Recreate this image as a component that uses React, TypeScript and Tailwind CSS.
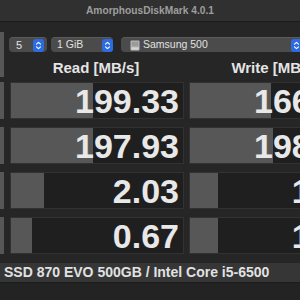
import React from "react";

type Row = { r: string; rw: number; w: string; ww: number };

const rows: Row[] = [
  { r: "199.33", rw: 82, w: "166.55", ww: 81 },
  { r: "197.93", rw: 82, w: "198.26", ww: 83 },
  { r: "2.03", rw: 33, w: "1.50", ww: 28 },
  { r: "0.67", rw: 21, w: "1.49", ww: 28 },
];

function Stepper() {
  return (
    <div className="w-[11px] h-[13px] rounded-[3px] bg-[#2d6be2] flex items-center justify-center shrink-0">
      <svg width="7" height="9" viewBox="0 0 7 9" fill="none">
        <path d="M1.5 3.2 L3.5 1.4 L5.5 3.2" stroke="#fff" strokeWidth="1.1" strokeLinecap="round" strokeLinejoin="round" />
        <path d="M1.5 5.8 L3.5 7.6 L5.5 5.8" stroke="#fff" strokeWidth="1.1" strokeLinecap="round" strokeLinejoin="round" />
      </svg>
    </div>
  );
}

function DiskIcon() {
  return (
    <svg width="10" height="11" viewBox="0 0 10 11" className="shrink-0">
      <rect x="0.5" y="0.5" width="9" height="10" rx="1" fill="#bdbdbd" />
      <rect x="1.5" y="1.5" width="7" height="5" fill="#9a9a9a" />
      <rect x="1.5" y="7.5" width="7" height="2" fill="#d6d6d6" />
    </svg>
  );
}

function Cell({ value, fill }: { value: string; fill: number }) {
  return (
    <div className="relative w-[174px] h-[37px] shrink-0 border border-[#323232] bg-[#1f1f1f]">
      <div className="absolute left-0 top-0 bottom-0 bg-[#575757]" style={{ width: fill }} />
      <div className="relative h-full flex items-center justify-end pr-[4px] pt-[1px] text-[34px] font-bold leading-none text-[#e8e8e8]">
        {value}
      </div>
    </div>
  );
}

export default function App() {
  return (
    <div className="w-[300px] h-[300px] overflow-hidden bg-[#262626] font-['Liberation_Sans',Arial,sans-serif] flex flex-col">
      <div className="h-[22px] shrink-0 bg-[#303030] border-b border-[#1a1a1a] flex items-center justify-center text-[10.2px] font-bold text-[#9e9e9e]">
        AmorphousDiskMark 4.0.1
      </div>

      <div className="flex mt-[10px]">
        <div className="w-[4px] h-[45px] bg-[#575757] shrink-0" />
        <div className="flex flex-col ml-[5px]">
          <div className="flex items-start pt-[5px] gap-[4px]">
            <div className="w-[38px] h-[15px] rounded-[4px] bg-[#4b4b4b] border-t border-[#5a5a5a] flex items-center justify-between pl-[7px] pr-[3px] text-[11px] text-[#e2e2e2]">
              <span>5</span>
              <Stepper />
            </div>
            <div className="w-[62px] h-[15px] rounded-[4px] bg-[#4b4b4b] border-t border-[#5a5a5a] flex items-center justify-between pl-[6px] pr-[0px] text-[10.5px] text-[#e2e2e2]">
              <span>1 GiB</span>
              <Stepper />
            </div>
            <div className="w-[185px] h-[15px] ml-[4px] rounded-[4px] bg-[#4b4b4b] border-t border-[#5a5a5a] flex items-center justify-between pl-[9px] pr-[4px] text-[10.5px] text-[#e2e2e2]">
              <div className="flex items-center gap-[3px]">
                <DiskIcon />
                <span>Samsung 500</span>
              </div>
              <Stepper />
            </div>
          </div>
          <div className="flex mt-[7px]">
            <div className="w-[174px] text-center text-[15px] font-bold leading-[17px] text-[#e4e4e4]">Read [MB/s]</div>
            <div className="w-[174px] ml-[5px] text-center text-[15px] font-bold leading-[17px] text-[#e4e4e4]">Write [MB/s]</div>
          </div>
        </div>
      </div>

      <div className="flex flex-col gap-[8px] mt-[5px]">
        {rows.map((row, i) => (
          <div key={i} className="flex">
            <div className="w-[4px] h-[37px] bg-[#575757] shrink-0" />
            <div className="ml-[6px]">
              <Cell value={row.r} fill={row.rw} />
            </div>
            <div className="ml-[5px]">
              <Cell value={row.w} fill={row.ww} />
            </div>
          </div>
        ))}
      </div>

      <div className="mt-[9px] h-[20px] shrink-0 bg-[#363636] border-b border-[#1c1c1c] flex items-center pl-[4px] text-[14px] font-bold text-[#e2e2e2] whitespace-nowrap">
        SSD 870 EVO 500GB / Intel Core i5-6500
      </div>
      <div className="flex-1 bg-[#232323]" />
    </div>
  );
}
